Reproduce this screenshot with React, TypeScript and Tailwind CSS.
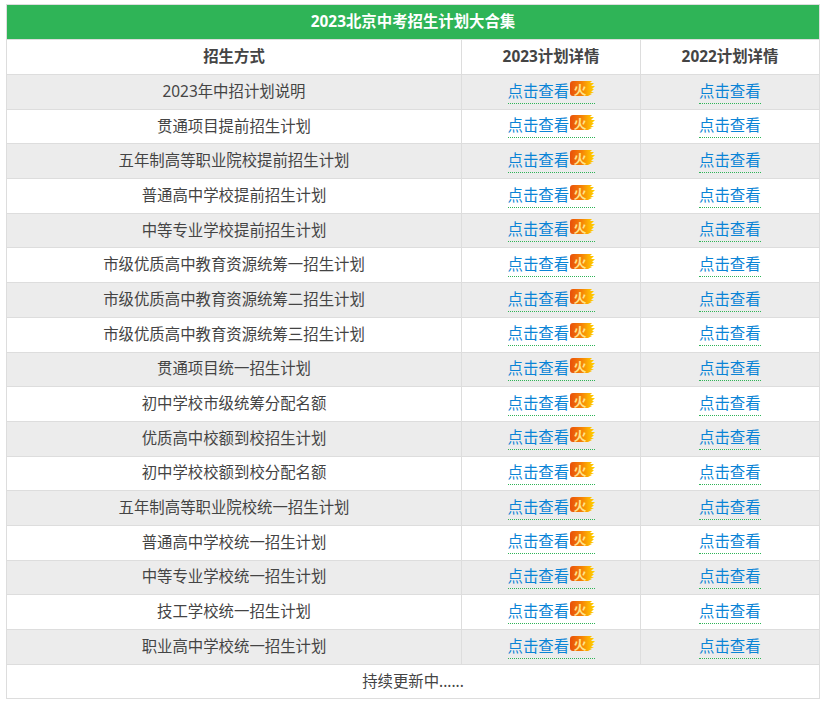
const rows = [
  "2023年中招计划说明",
  "贯通项目提前招生计划",
  "五年制高等职业院校提前招生计划",
  "普通高中学校提前招生计划",
  "中等专业学校提前招生计划",
  "市级优质高中教育资源统筹一招生计划",
  "市级优质高中教育资源统筹二招生计划",
  "市级优质高中教育资源统筹三招生计划",
  "贯通项目统一招生计划",
  "初中学校市级统筹分配名额",
  "优质高中校额到校招生计划",
  "初中学校校额到校分配名额",
  "五年制高等职业院校统一招生计划",
  "普通高中学校统一招生计划",
  "中等专业学校统一招生计划",
  "技工学校统一招生计划",
  "职业高中学校统一招生计划",
];

function HotIcon() {
  return (
    <svg width="25" height="21" viewBox="0 -3 25 21" className="absolute left-[62px] top-[-3px]">
      <defs>
        <linearGradient id="hot" x1="0" y1="0" x2="1" y2="0">
          <stop offset="0" stopColor="#e8500a" />
          <stop offset="0.45" stopColor="#f57f06" />
          <stop offset="0.75" stopColor="#fdb202" />
          <stop offset="1" stopColor="#ffd400" />
        </linearGradient>
      </defs>
      <path
        d="M3 0H22L20 2H24L21 5H25L22 8H24L21 11H24L20 13H22L18 15H3Q0 15 0 12V3Q0 0 3 0Z"
        fill="url(#hot)"
      />
      <text
        x="10"
        y="12.5"
        textAnchor="middle"
        fontSize="13"
        fontWeight="700"
        fill="#ffe48a"
        fontFamily='"Noto Sans CJK SC", sans-serif'
      >
        火
      </text>
    </svg>
  );
}

function ViewLink({ hot }: { hot?: boolean }) {
  return (
    <a
      href="#"
      className={`relative inline-block h-[23px] whitespace-nowrap border-b border-dotted border-[#2fb457] text-left align-middle leading-[22px] text-[#0a84d6] ${hot ? "w-[87px]" : "w-[62px]"}`}
    >
      点击查看
      {hot && <HotIcon />}
    </a>
  );
}

export default function App() {
  return (
    <div className="min-h-[706px] bg-white pl-[6px] pt-[4px] font-['Noto_Sans','Noto_Sans_CJK_SC',sans-serif] text-[15.4px] leading-[22px] text-[#444]">
      <table className="w-[813px] table-fixed border-collapse border border-[#ddd] text-center">
        <colgroup>
          <col className="w-[455px]" />
          <col className="w-[179px]" />
          <col className="w-[179px]" />
        </colgroup>
        <thead>
          <tr className="h-[35px] bg-[#2fb457]">
            <th colSpan={3} className="p-0 font-bold text-white">
              2023北京中考招生计划大合集
            </th>
          </tr>
          <tr className="h-[35px]">
            <th className="border border-[#ddd] p-0 font-bold">招生方式</th>
            <th className="border border-[#ddd] p-0 font-bold">2023计划详情</th>
            <th className="border border-[#ddd] p-0 font-bold">2022计划详情</th>
          </tr>
        </thead>
        <tbody>
          {rows.map((name, i) => (
            <tr key={name} className={`h-[34.7px] ${i % 2 === 0 ? "bg-[#ececec]" : "bg-white"}`}>
              <td className="border border-[#ddd] p-0">{name}</td>
              <td className="border border-[#ddd] p-0">
                <ViewLink hot />
              </td>
              <td className="border border-[#ddd] p-0">
                <ViewLink />
              </td>
            </tr>
          ))}
          <tr className="h-[34.7px]">
            <td colSpan={3} className="border border-[#ddd] p-0">
              持续更新中......
            </td>
          </tr>
        </tbody>
      </table>
    </div>
  );
}
